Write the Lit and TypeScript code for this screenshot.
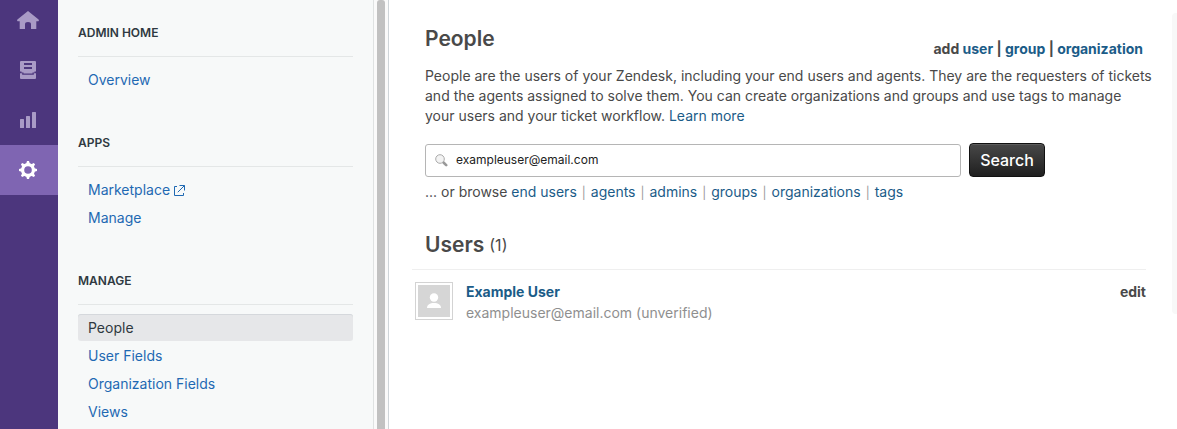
import { LitElement, html, css, svg, nothing } from "lit";
import { customElement, state } from "lit/decorators.js";
import { classMap } from "lit/directives/class-map.js";

interface NavItem {
  label: string;
  external?: boolean;
}

const SECTIONS: { title: string; items: NavItem[] }[] = [
  { title: "ADMIN HOME", items: [{ label: "Overview" }] },
  { title: "APPS", items: [{ label: "Marketplace", external: true }, { label: "Manage" }] },
  {
    title: "MANAGE",
    items: [{ label: "People" }, { label: "User Fields" }, { label: "Organization Fields" }, { label: "Views" }],
  },
];

const RAIL = [
  {
    label: "Home",
    icon: svg`<path d="M13 4 L23.6 12.4 Q24.600 14.200 22.600 14.200 L21.300 14.200 V22 H16 V17.400 Q16 15 13 15 Q10 15 10 17.400 V22 H4.700 V14.200 H3.400 Q1.400 14.200 2.400 12.400 Z"/>`,
  },
  {
    label: "Views",
    icon: svg`<path fill-rule="evenodd" d="M6 4h14q1 0 1 1v9.500h-1.500v1h-2v1h-9v-1h-2v-1H5V5q0-1 1-1z M9 6v2h8V6z M9 10v2h8v-2z"/><path d="M5 16.200h2.200v1.500h11.600v-1.500H21V21q0 1-1 1H6q-1 0-1-1z"/>`,
  },
  {
    label: "Reporting",
    icon: svg`<rect x="5" y="12" width="4" height="9" rx="0.500"/><rect x="11" y="9" width="4" height="12" rx="0.500"/><rect x="17" y="5" width="4" height="16" rx="0.500"/>`,
  },
  {
    label: "Admin",
    icon: svg`<circle cx="13" cy="13" r="5.400" fill="none" stroke="currentColor" stroke-width="3.200"/>${[0, 45, 90, 135, 180, 225, 270, 315].map(
      (a) => svg`<path d="M10.900 7.500 L12 4 H14 L15.100 7.500 Z" transform="rotate(${a} 13 13)"/>`
    )}`,
  },
];

const BROWSE = ["end users", "agents", "admins", "groups", "organizations", "tags"];

@customElement("app-rail")
export class AppRail extends LitElement {
  static styles = css`
    :host {
      display: block;
      flex: none;
      width: 58px;
      background: #4c367d;
    }
    .item {
      display: flex;
      align-items: center;
      justify-content: center;
      height: 50px;
      padding-right: 2px;
      color: #a99bc6;
    }
    .item:first-child {
      height: 40px;
      padding-bottom: 5px;
    }
    .item.active {
      background: #7f65b2;
      color: #fff;
    }
    .icon {
      width: 26px;
      height: 26px;
      fill: currentColor;
    }
  `;

  render() {
    return html`<nav aria-label="Products">
      ${RAIL.map(
        (r) => html`<a href="#" aria-label=${r.label} class=${classMap({ item: true, active: r.label === "Admin" })}>
          <svg class="icon" viewBox="0 0 26 26" aria-hidden="true">${r.icon}</svg>
        </a>`
      )}
    </nav>`;
  }
}

@customElement("admin-sidebar")
export class AdminSidebar extends LitElement {
  static styles = css`
    :host {
      display: flex;
      flex: none;
      width: 331px;
      box-sizing: border-box;
      background: #f7f9f9;
      border-right: 1px solid #cfd5d9;
    }
    .menu {
      flex: 1;
      padding: 0 20px;
      border-right: 1px solid #dfe2e2;
    }
    .track {
      width: 14px;
      padding-left: 3px;
      padding-right: 3px;
      box-sizing: border-box;
      background: #fafafa;
    }
    .thumb {
      height: 100%;
      border-radius: 3px 3px 0 0;
      background: #c1c1c1;
    }
    .section {
      padding: 25px 0 16px;
    }
    .title {
      margin: 0;
      padding-bottom: 15px;
      border-bottom: 1px solid #e4e7e7;
      font-size: 12px;
      line-height: 16px;
      font-weight: 600;
      color: #2f3941;
    }
    .list {
      margin: 0;
      padding: 9px 0 0;
      list-style: none;
    }
    .row {
      margin-bottom: 1px;
    }
    .link {
      display: flex;
      align-items: center;
      gap: 4px;
      padding: 0 10px;
      border-radius: 3px;
      font-size: 14px;
      line-height: 27px;
      color: #1f69b3;
      text-decoration: none;
    }
    .link.current {
      background: #e6e7e9;
      box-shadow: inset 0 1px 0 #d5d8dc;
      color: #2f3941;
    }
    .ext {
      width: 11px;
      height: 11px;
      margin-top: 2px;
      fill: none;
      stroke: currentColor;
    }
  `;

  render() {
    return html`<nav class="menu" aria-label="Admin">
        ${SECTIONS.map(
          (s) => html`<section class="section">
            <h2 class="title">${s.title}</h2>
            <ul class="list">
              ${s.items.map(
                (i) => html`<li class="row">
                  <a href="#" class=${classMap({ link: true, current: i.label === "People" })}
                    >${i.label}${i.external
                      ? html`<svg class="ext" viewBox="0 0 11 11" aria-hidden="true">
                          <path d="M3 1.500H0.500V10.500H9.500V8M5.500 0.500H10.500V5.500M10.500 0.500L3.800 7.200" />
                        </svg>`
                      : nothing}</a
                  >
                </li>`
              )}
            </ul>
          </section>`
        )}
      </nav>
      <div class="track"><div class="thumb"></div></div>`;
  }
}

@customElement("app-root")
export class AppRoot extends LitElement {
  @state() query = "exampleuser@email.com";

  static styles = css`
    :host {
      display: flex;
      height: 100vh;
      overflow: hidden;
      background: #fff;
      font-family: Inter, "Liberation Sans", sans-serif;
      font-size: 14px;
      line-height: 20px;
      color: #494949;
    }
    .main {
      flex: 1;
      min-width: 0;
      padding: 25px 26px 0 23px;
    }
    .panel-edge {
      flex: none;
      width: 5px;
      height: 301px;
      margin-top: 13px;
      border-radius: 4px 0 0 4px;
      background: #f8f8f8;
    }
    .intro {
      padding: 0 3px 0 13px;
    }
    a {
      color: #1b5c88;
      text-decoration: none;
    }
    .head {
      display: flex;
      justify-content: space-between;
      align-items: flex-end;
      height: 34px;
    }
    .heading {
      margin: 0;
      font-size: 21px;
      line-height: 28px;
      font-weight: 600;
    }
    .head .heading {
      align-self: flex-start;
    }
    .add {
      font-weight: 700;
    }
    .text {
      margin: 7px -16px 17px 0;
    }
    .search {
      display: flex;
      align-items: center;
      gap: 8px;
      padding-right: 98px;
    }
    .field {
      display: flex;
      align-items: center;
      flex: 1;
      gap: 8px;
      height: 33px;
      padding: 0 9px;
      box-sizing: border-box;
      border: 1px solid #b5b5b5;
      border-radius: 3px;
    }
    .glass {
      flex: none;
      width: 13px;
      height: 13px;
    }
    .input {
      flex: 1;
      min-width: 0;
      padding: 0;
      border: 0;
      outline: 0;
      background: none;
      font: inherit;
      font-size: 12px;
      line-height: 16px;
      color: #222;
    }
    .button {
      width: 76px;
      height: 34px;
      padding: 0;
      border: 1px solid #111;
      border-radius: 4px;
      background: linear-gradient(#484848, #1f1f1f);
      box-shadow: inset 0 1px 0 #5c5c5c;
      font: inherit;
      font-size: 16px;
      font-weight: 500;
      color: #fff;
    }
    .browse {
      margin: 5px 0 0;
    }
    .sep {
      margin: 0 5px;
      font-size: 12px;
      color: #999;
    }
    .users {
      display: flex;
      align-items: center;
      gap: 5px;
      margin-top: 28px;
      padding: 0 0 10px 13px;
    }
    .count {
      font-size: 16px;
    }
    .user {
      display: flex;
      padding: 12px 0 0 3px;
      border-top: 1px solid #efefef;
    }
    .avatar {
      box-sizing: border-box;
      width: 38px;
      height: 38px;
      padding: 2px;
      border: 1px solid #d3d3d3;
    }
    .face {
      display: block;
      width: 32px;
      height: 32px;
      background: #d6d6d6;
    }
    .info {
      flex: 1;
      padding-left: 13px;
    }
    .name,
    .edit {
      font-weight: 700;
    }
    .edit {
      color: #494949;
    }
    .mail {
      margin-top: 1px;
      color: #8f8f8f;
    }
  `;

  render() {
    return html`<app-rail></app-rail>
      <admin-sidebar></admin-sidebar>
      <main class="main">
        <div class="intro">
          <div class="head">
            <h1 class="heading">People</h1>
            <div class="add">add <a href="#">user</a> | <a href="#">group</a> | <a href="#">organization</a></div>
          </div>
          <p class="text">
            People are the users of your Zendesk, including your end users and agents. They are the requesters of tickets<br />
            and the agents assigned to solve them. You can create organizations and groups and use tags to manage<br />
            your users and your ticket workflow. <a href="#">Learn more</a>
          </p>
          <form class="search" @submit=${(e: Event) => e.preventDefault()}>
            <label class="field">
              <svg class="glass" viewBox="0 0 13 13" aria-hidden="true">
                <path d="M8.500 8.500L11.200 11.200" stroke="#999" stroke-width="2.600" stroke-linecap="round" />
                <circle cx="5" cy="5" r="4.300" fill="#f3f3f3" stroke="#aaa" />
              </svg>
              <input
                class="input"
                type="text"
                aria-label="Search users"
                .value=${this.query}
                @input=${(e: Event) => (this.query = (e.target as HTMLInputElement).value)}
              />
            </label>
            <button class="button" type="submit">Search</button>
          </form>
          <p class="browse">
            ... or browse
            ${BROWSE.map((b, i) => html`${i ? html`<span class="sep">|</span>` : nothing}<a href="#">${b}</a>`)}
          </p>
        </div>
        <div class="users">
          <h2 class="heading">Users</h2>
          <span class="count">(1)</span>
        </div>
        <div class="user">
          <div class="avatar">
            <svg class="face" viewBox="0 0 32 32" aria-hidden="true">
              <circle cx="16" cy="12.500" r="4.200" fill="#fff" />
              <path d="M9 23C9 19.500 12 18 16 18S23 19.500 23 23Z" fill="#fff" />
            </svg>
          </div>
          <div class="info">
            <a class="name" href="#">Example User</a>
            <div class="mail">exampleuser@email.com (unverified)</div>
          </div>
          <a class="edit" href="#">edit</a>
        </div>
      </main>
      <div class="panel-edge"></div>`;
  }
}
